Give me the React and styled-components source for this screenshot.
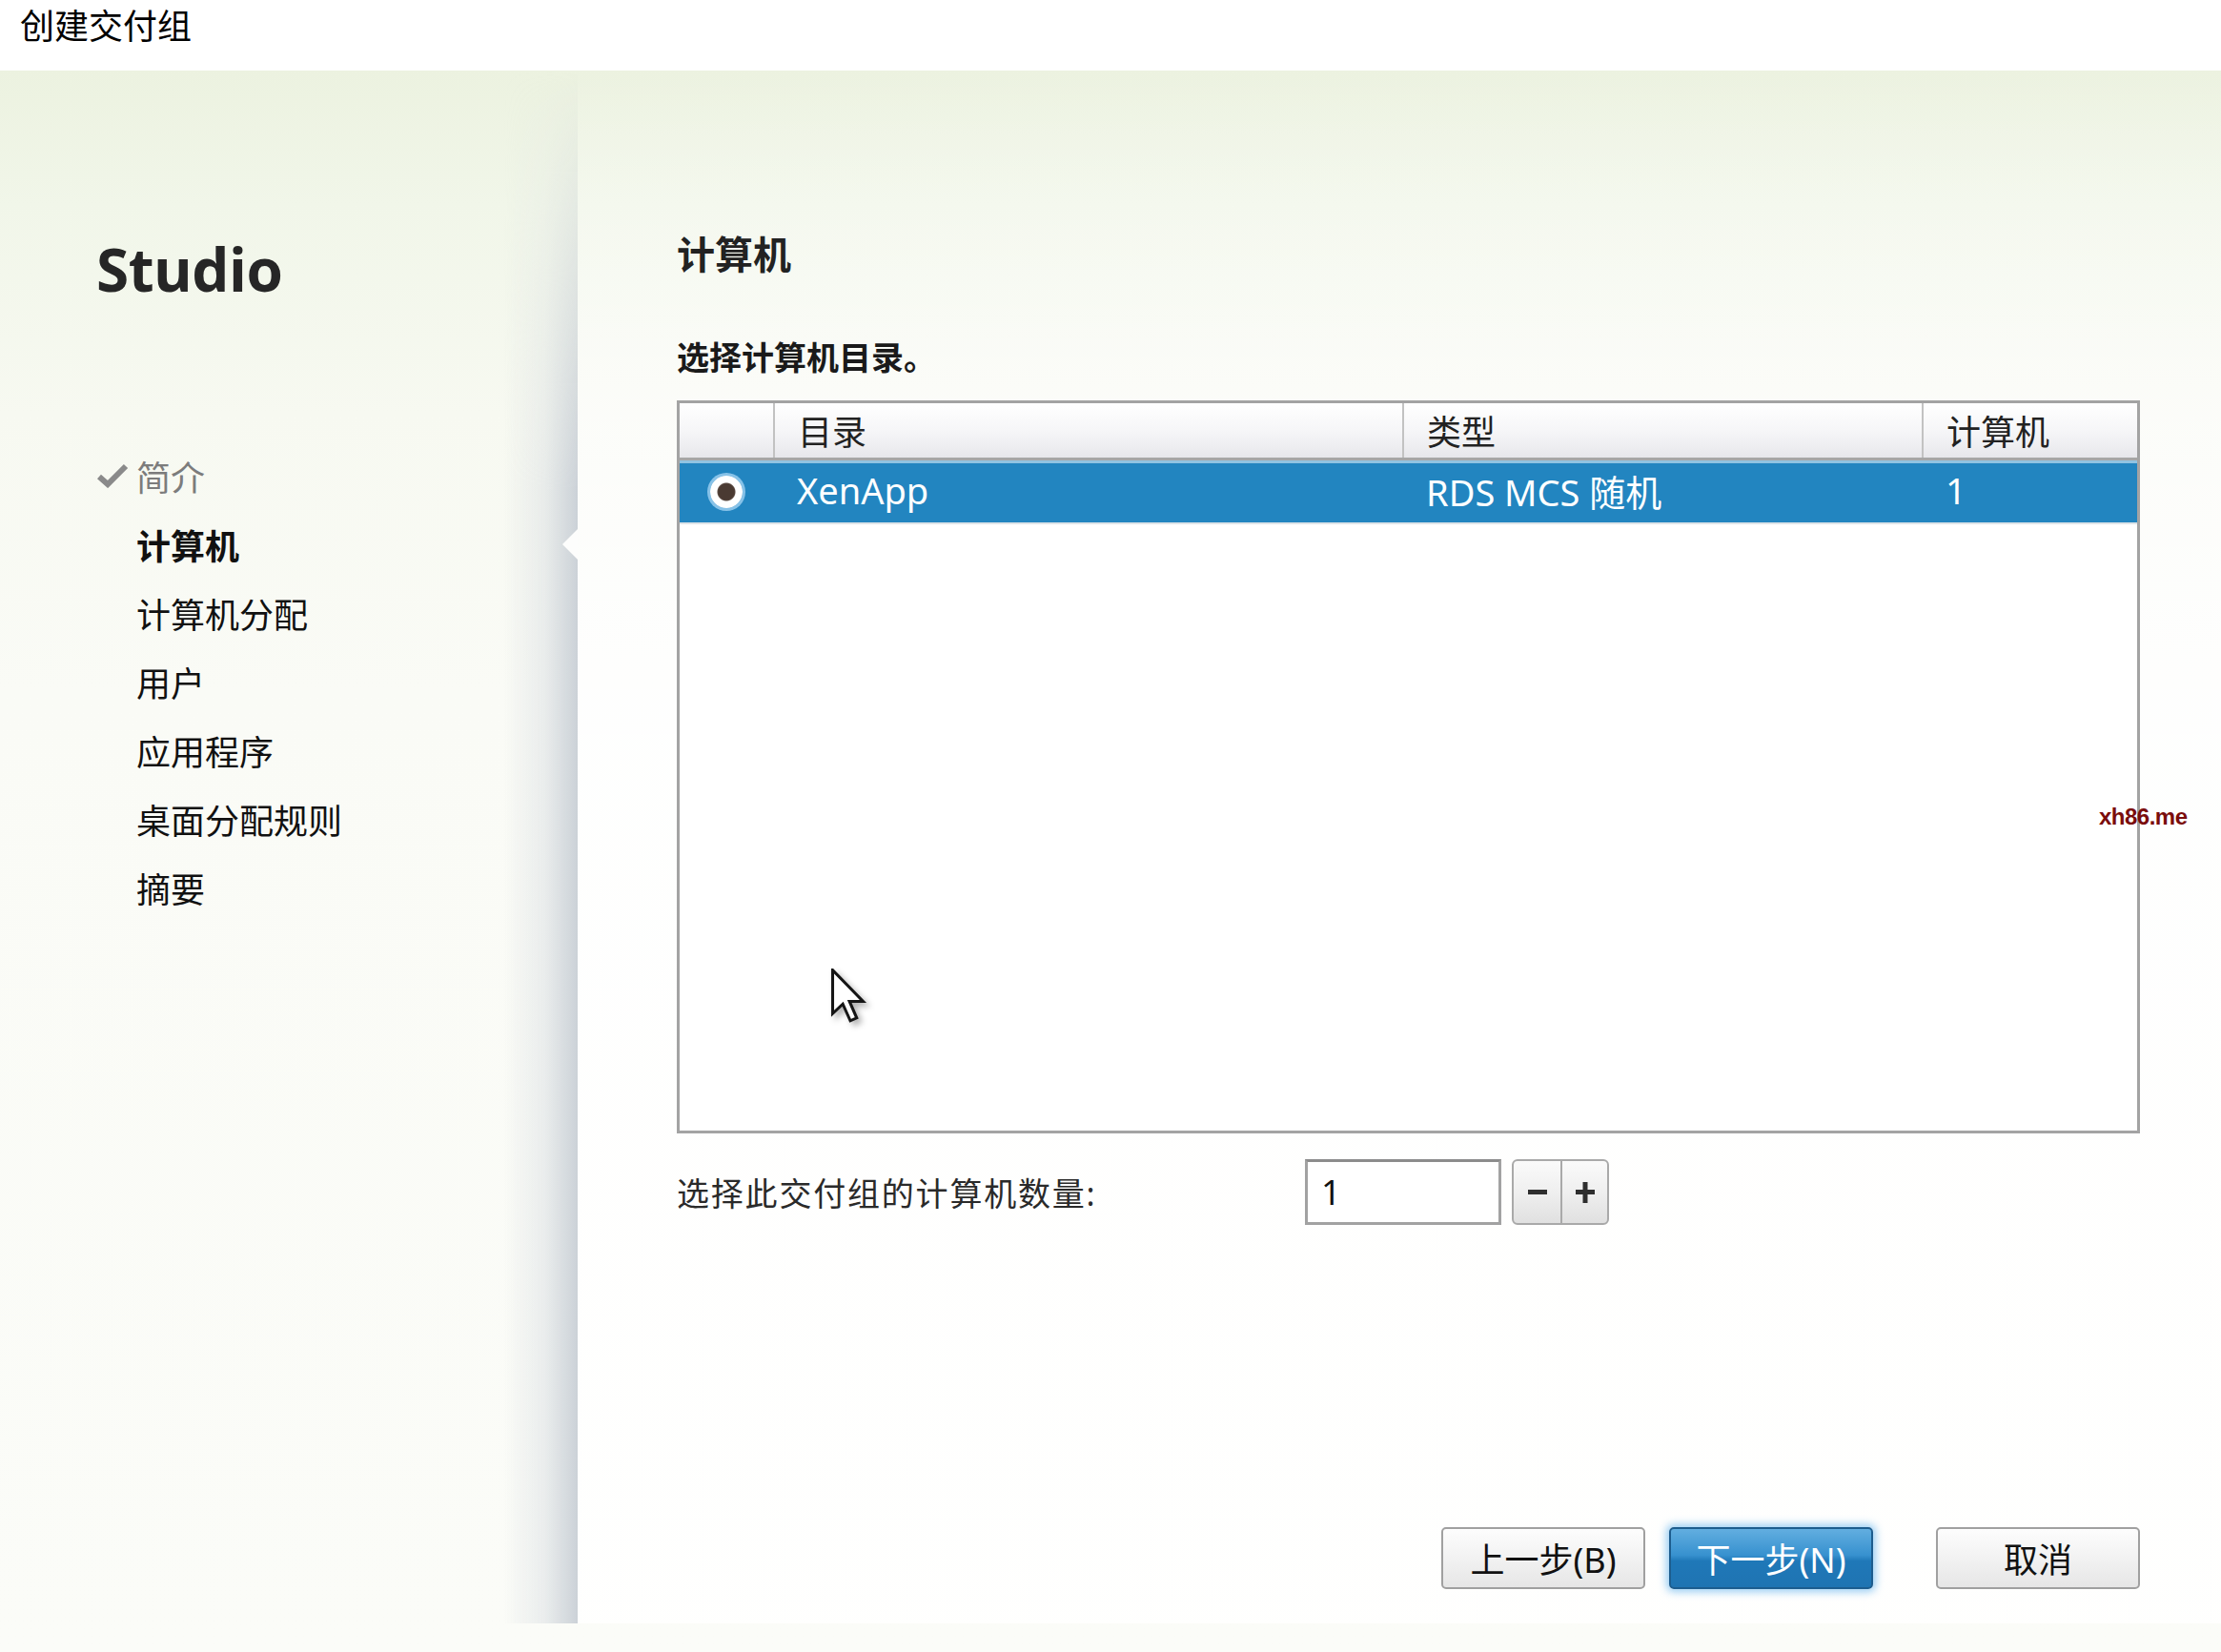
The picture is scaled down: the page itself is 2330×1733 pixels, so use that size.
import React from 'react';
import styled, { createGlobalStyle } from 'styled-components';

const GlobalStyle = createGlobalStyle`
  html, body { margin: 0; padding: 0; }
  body {
    width: 2330px; height: 1733px; overflow: hidden; background: #fff;
    font-family: "Noto Sans", "Noto Sans CJK SC", sans-serif;
  }
  * { box-sizing: border-box; }
`;

const CJK = `"Noto Sans", "Noto Sans CJK SC", sans-serif`;

const Window = styled.div`
  position: relative;
  width: 2330px;
  height: 1733px;
  display: flex;
  flex-direction: column;
`;

const TitleBar = styled.div`
  flex: none;
  height: 74px;
  background: #fff;
  padding: 4px 0 0 21px;
  font-family: ${CJK};
  font-size: 36px;
  line-height: 48px;
  color: #000;
`;

const Body = styled.div`
  flex: 1;
  display: flex;
  flex-direction: column;
  min-height: 0;
  background: linear-gradient(180deg, #ecf2e0 0px, #f1f6e9 140px, #f7f9f1 360px, #fafbf6 650px, #fbfcf8 100%);
`;

const Columns = styled.div`
  flex: 1;
  display: flex;
  min-height: 0;
`;

const BottomStrip = styled.div`
  flex: none;
  height: 30px;
`;

const Sidebar = styled.aside`
  position: relative;
  flex: none;
  width: 606px;
  padding: 171px 0 0 101px;
  &::after {
    content: "";
    position: absolute;
    top: 0;
    right: 0;
    bottom: 0;
    width: 78px;
    background: linear-gradient(90deg, rgba(214,219,224,0) 0%, rgba(214,219,224,0.45) 55%, #cbd1d7 100%);
    -webkit-mask-image: linear-gradient(180deg, transparent 0, rgba(0,0,0,0.4) 170px, #000 440px);
    mask-image: linear-gradient(180deg, transparent 0, rgba(0,0,0,0.4) 170px, #000 440px);
  }
`;

const Brand = styled.div`
  font-family: "Open Sans", sans-serif;
  font-weight: 700;
  font-size: 62px;
  line-height: 74px;
  color: #262626;
  letter-spacing: -0.5px;
`;

const NavList = styled.ul`
  list-style: none;
  margin: 144px 0 0;
  padding: 0;
`;

const NavItem = styled.li`
  position: relative;
  height: 72px;
  display: flex;
  align-items: center;
  font-family: ${CJK};
  font-size: 36px;
  color: ${p => (p.$done ? '#7c7c7c' : '#111')};
  font-weight: ${p => (p.$active ? 700 : 400)};
  ${p =>
    p.$active &&
    `
    &::after {
      content: "";
      position: absolute;
      right: 0;
      top: 50%;
      transform: translateY(-50%);
      width: 0;
      height: 0;
      border-top: 16px solid transparent;
      border-bottom: 16px solid transparent;
      border-right: 16px solid #fdfdfc;
      z-index: 2;
    }
  `}
`;

const Mark = styled.span`
  flex: none;
  width: 42px;
  display: flex;
  align-items: center;
`;

const Main = styled.main`
  flex: 1;
  display: flex;
  flex-direction: column;
  padding: 169px 85px 36px 104px;
  background: linear-gradient(180deg, rgba(255,255,255,0) 0, rgba(255,255,255,0.55) 330px, rgba(255,255,255,0.88) 700px, rgba(255,255,255,0.9) 100%);
`;

const Heading = styled.h1`
  margin: 0;
  font-family: ${CJK};
  font-size: 40px;
  line-height: 48px;
  font-weight: 700;
  color: #222;
`;

const SubHeading = styled.h2`
  margin: 64px 0 0;
  font-family: ${CJK};
  font-size: 34px;
  line-height: 41px;
  font-weight: 700;
  color: #1a1a1a;
`;

const Table = styled.div`
  margin-top: 24px;
  height: 769px;
  border: 3px solid #a3a3a3;
  background: #fff;
  display: flex;
  flex-direction: column;
`;

const COLS = '98px 660px 545px 1fr';

const HeaderRow = styled.div`
  display: grid;
  grid-template-columns: ${COLS};
  height: 60px;
  background: linear-gradient(180deg, #ffffff 0%, #f5f5f7 55%, #e7e7eb 100%);
  border-bottom: 3px solid #a6a6a6;
`;

const HeaderCell = styled.div`
  display: flex;
  align-items: center;
  padding-left: 24px;
  font-family: ${CJK};
  font-size: 36px;
  color: #222;
  border-left: ${p => (p.$first ? 'none' : '2px solid #c2c2c2')};
`;

const DataRow = styled.div`
  display: grid;
  grid-template-columns: ${COLS};
  height: 67px;
  border-top: 3px solid #90c3e2;
  border-bottom: 2px solid #dde3e8;
  background: ${p => (p.$selected ? '#2285c0' : '#fff')};
  color: ${p => (p.$selected ? '#fff' : '#222')};
`;

const DataCell = styled.div`
  display: flex;
  align-items: center;
  justify-content: ${p => (p.$center ? 'center' : 'flex-start')};
  padding-left: ${p => (p.$center ? '0' : '25px')};
  padding-bottom: ${p => (p.$center ? '0' : '6px')};
  font-family: ${CJK};
  font-size: 38px;
`;

const Radio = styled.span`
  width: 34px;
  height: 34px;
  margin-bottom: 2px;
  border-radius: 50%;
  background: radial-gradient(circle, #4a3a32 0 8px, #5a4a42 9px, #ffffff 10px);
  box-shadow: 0 0 0 3px rgba(170, 215, 245, 0.75);
`;

const QtyRow = styled.div`
  margin-top: 27px;
  display: flex;
  align-items: center;
`;

const QtyLabel = styled.label`
  width: 659px;
  flex: none;
  font-family: ${CJK};
  font-size: 34px;
  letter-spacing: 1.8px;
  color: #2a2a2a;
`;

const NumberInput = styled.input`
  width: 206px;
  height: 69px;
  border: 3px solid #a2a2a2;
  border-top-color: #8c8c8c;
  background: #fff;
  padding: 0 0 0 14px;
  font-family: ${CJK};
  font-size: 36px;
  color: #111;
  outline: none;
`;

const Stepper = styled.div`
  margin-left: 11px;
  width: 102px;
  height: 69px;
  display: grid;
  grid-template-columns: 1fr 1fr;
  border: 2px solid #a9a9a9;
  border-radius: 6px;
  background: linear-gradient(180deg, #fafafa 0%, #eeeeee 55%, #e0e0e0 100%);
  overflow: hidden;
`;

const StepButton = styled.span`
  position: relative;
  display: flex;
  align-items: center;
  justify-content: center;
  border-left: ${p => (p.$divider ? '2px solid #a9a9a9' : 'none')};
  &::before {
    content: "";
    width: 20px;
    height: 5px;
    background: #2e2e2e;
  }
  ${p =>
    p.$plus &&
    `
    &::after {
      content: "";
      position: absolute;
      left: 50%;
      top: 50%;
      width: 5px;
      height: 22px;
      transform: translate(-50%, -50%);
      background: #2e2e2e;
    }
  `}
`;

const ButtonBar = styled.div`
  margin-top: auto;
  display: flex;
  justify-content: flex-end;
  align-items: center;
`;

const Button = styled.button`
  width: 214px;
  height: 65px;
  margin-left: ${p => p.$gap || 0}px;
  border-radius: 5px;
  font-family: ${CJK};
  font-size: 36px;
  padding: 0;
  cursor: default;
  border: 2px solid ${p => (p.$primary ? '#1d5d8e' : '#a0a0a0')};
  color: ${p => (p.$primary ? '#fff' : '#111')};
  background: ${p =>
    p.$primary
      ? 'linear-gradient(180deg, #62aee0 0%, #3791cf 45%, #1f78b8 55%, #1f74b2 100%)'
      : 'linear-gradient(180deg, #fdfdfd 0%, #f2f2f2 50%, #e6e6e6 100%)'};
  box-shadow: ${p => (p.$primary ? '0 0 9px 3px rgba(120, 190, 240, 0.75)' : 'none')};
`;

const Watermark = styled.div`
  position: absolute;
  left: 2202px;
  top: 843px;
  font-family: "Liberation Sans", sans-serif;
  font-weight: 700;
  font-size: 24px;
  letter-spacing: -0.5px;
  color: #7a0c0c;
`;

const Cursor = styled.svg`
  position: absolute;
  left: 872px;
  top: 1016px;
  filter: drop-shadow(4px 4px 3px rgba(0, 0, 0, 0.3));
`;

const navItems = [
  { label: '简介', done: true },
  { label: '计算机', active: true },
  { label: '计算机分配' },
  { label: '用户' },
  { label: '应用程序' },
  { label: '桌面分配规则' },
  { label: '摘要' },
];

function CheckIcon() {
  return (
    <svg width="34" height="26" viewBox="0 0 34 26">
      <path d="M3 14 L12 22 L31 3" fill="none" stroke="#8a8a8a" strokeWidth="6" strokeLinejoin="miter" />
    </svg>
  );
}

export default function App() {
  return (
    <Window>
      <GlobalStyle />
      <TitleBar>创建交付组</TitleBar>
      <Body>
        <Columns>
          <Sidebar>
            <Brand>Studio</Brand>
            <NavList>
              {navItems.map(item => (
                <NavItem key={item.label} $done={item.done} $active={item.active}>
                  <Mark>{item.done && <CheckIcon />}</Mark>
                  {item.label}
                </NavItem>
              ))}
            </NavList>
          </Sidebar>
          <Main>
            <Heading>计算机</Heading>
            <SubHeading>选择计算机目录。</SubHeading>
            <Table>
              <HeaderRow>
                <HeaderCell $first />
                <HeaderCell>目录</HeaderCell>
                <HeaderCell>类型</HeaderCell>
                <HeaderCell>计算机</HeaderCell>
              </HeaderRow>
              <DataRow $selected>
                <DataCell $center>
                  <Radio />
                </DataCell>
                <DataCell>XenApp</DataCell>
                <DataCell>RDS MCS 随机</DataCell>
                <DataCell>1</DataCell>
              </DataRow>
            </Table>
            <QtyRow>
              <QtyLabel>选择此交付组的计算机数量:</QtyLabel>
              <NumberInput value="1" readOnly />
              <Stepper>
                <StepButton />
                <StepButton $divider $plus />
              </Stepper>
            </QtyRow>
            <ButtonBar>
              <Button>上一步(B)</Button>
              <Button $primary $gap={25}>下一步(N)</Button>
              <Button $gap={66}>取消</Button>
            </ButtonBar>
          </Main>
        </Columns>
        <BottomStrip />
      </Body>
      <Watermark>xh86.me</Watermark>
      <Cursor width="38" height="58" viewBox="0 0 12.5 19">
        <path d="M0.5 0.5 L0.5 15.5 L4 12.2 L6.6 18 L8.8 17 L6.3 11.3 L11 11.3 Z" fill="#fff" stroke="#151515" strokeWidth="1" strokeLinejoin="miter" />
      </Cursor>
    </Window>
  );
}
